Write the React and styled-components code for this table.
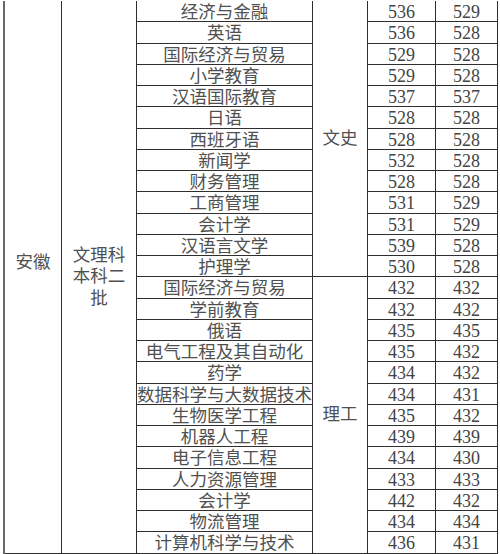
import React from 'react'
import styled, { createGlobalStyle } from 'styled-components'

const GlobalStyle = createGlobalStyle`
    body {
        margin: 0;
        background: #ffffff;
    }
`;

const wenshi = [
    ['经济与金融', 536, 529],
    ['英语', 536, 528],
    ['国际经济与贸易', 529, 528],
    ['小学教育', 529, 528],
    ['汉语国际教育', 537, 537],
    ['日语', 528, 528],
    ['西班牙语', 528, 528],
    ['新闻学', 532, 528],
    ['财务管理', 528, 528],
    ['工商管理', 531, 529],
    ['会计学', 531, 529],
    ['汉语言文学', 539, 528],
    ['护理学', 530, 528],
]

const ligong = [
    ['国际经济与贸易', 432, 432],
    ['学前教育', 432, 432],
    ['俄语', 435, 435],
    ['电气工程及其自动化', 435, 432],
    ['药学', 434, 432],
    ['数据科学与大数据技术', 434, 431],
    ['生物医学工程', 435, 432],
    ['机器人工程', 439, 439],
    ['电子信息工程', 434, 430],
    ['人力资源管理', 433, 433],
    ['会计学', 442, 432],
    ['物流管理', 434, 434],
    ['计算机科学与技术', 436, 431],
]

const App = () => {
    const total = wenshi.length + ligong.length

    const renderGroup = (rows, offset) =>
        rows.map((row, i) => (
            <React.Fragment key={offset + i}>
                <Cell $col={3} $row={offset + i + 1}>{row[0]}</Cell>
                <Num $col={5} $row={offset + i + 1}>{row[1]}</Num>
                <Num $col={6} $row={offset + i + 1}>{row[2]}</Num>
            </React.Fragment>
        ))

    return (
        <>
            <GlobalStyle />
            <Sheet>
                <Grid>
                    <Merged $col={1} $row={1} $span={total} $lift={28}>安徽</Merged>
                    <Merged $col={2} $row={1} $span={total} $narrow>文理科本科二批</Merged>
                    <Merged $col={4} $row={1} $span={wenshi.length} $lift={-4}>文史</Merged>
                    <Merged $col={4} $row={wenshi.length + 1} $span={ligong.length}>理工</Merged>
                    {renderGroup(wenshi, 0)}
                    {renderGroup(ligong, wenshi.length)}
                </Grid>
            </Sheet>
        </>
    )
}

const Sheet = styled.div`
    padding: 1px 0 0 3px;
    width: 495px;
    color: #505050;
`;

const Grid = styled.div`
    display: grid;
    grid-template-columns: 57px 75px 176px 55px 68px 62px;
    grid-auto-rows: 21.25px;
    border-left: 2px solid #6a6a6a;
    font-family: "Liberation Serif", "Noto Sans CJK SC", serif;
`;

const Cell = styled.div`
    grid-column: ${p => p.$col};
    grid-row: ${p => p.$row};
    box-sizing: border-box;
    display: flex;
    align-items: center;
    justify-content: center;
    padding-top: 3px;
    border-right: 1px solid #2f2f2f;
    border-bottom: 1px solid #2f2f2f;
    font-size: 17.5px;
    line-height: 17px;
    white-space: nowrap;
`;

const Num = styled(Cell)`
    font-size: 18px;
    color: #444;
`;

const Merged = styled.div`
    grid-column: ${p => p.$col};
    grid-row: ${p => p.$row} / span ${p => p.$span};
    box-sizing: border-box;
    display: flex;
    align-items: center;
    justify-content: center;
    text-align: center;
    padding-bottom: ${p => (p.$lift || 0)}px;
    border-right: 1px solid #2f2f2f;
    border-bottom: 1px solid #2f2f2f;
    font-size: 17.5px;
    line-height: 21.5px;
    ${p => p.$narrow && 'padding-left: 9px; padding-right: 9px; word-break: break-all;'}
`;

export default App
